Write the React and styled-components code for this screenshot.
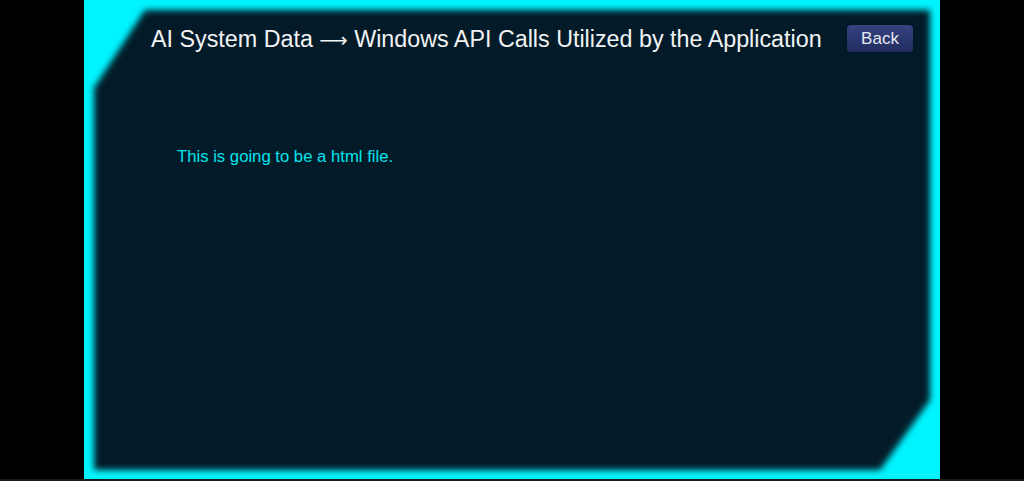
import React from 'react'
import styled, { createGlobalStyle } from 'styled-components'

const GlobalStyle = createGlobalStyle`
  html, body {
    margin: 0;
    padding: 0;
    background: #000;
    font-family: "Liberation Sans", Arial, sans-serif;
  }
`

const Screen = styled.div`
  width: 1024px;
  height: 481px;
  background: #000;
  display: flex;
  justify-content: center;
  box-sizing: border-box;
  border-bottom: 2px solid #1a1a1a;
`

const Frame = styled.div`
  width: 856px;
  height: 479px;
  background: #00f4ff;
  padding: 6px 6px 5px 6px;
  box-sizing: border-box;
  overflow: hidden;
`

const Panel = styled.section`
  position: relative;
  height: 100%;
  display: flex;
  flex-direction: column;
`

// the dark plate behind the content; blurred so its edges glow into the cyan frame
const Backdrop = styled.div`
  position: absolute;
  inset: 4px;
  filter: blur(3px);

  &::before {
    content: '';
    position: absolute;
    inset: 0;
    background: #031b29;
    clip-path: polygon(
      51px 0,
      100% 0,
      100% calc(100% - 70px),
      calc(100% - 50px) 100%,
      0 100%,
      0 78px
    );
  }
`

const Header = styled.header`
  position: relative;
  display: flex;
  align-items: flex-start;
  justify-content: space-between;
  padding: 18px 21px 0 61px;
`

const Title = styled.h1`
  margin: 0;
  font-size: 23.3px;
  line-height: 30px;
  font-weight: normal;
  color: #f1f3f4;
  white-space: nowrap;
`

const Arrow = styled.span`
  font-family: "DejaVu Sans", sans-serif;
  font-size: 0.85em;
`

const BackButton = styled.button`
  width: 66px;
  height: 27px;
  margin-top: 1px;
  border: none;
  border-radius: 4px;
  background: linear-gradient(#34427f, #222c60);
  color: #e6e8f2;
  font-family: "Liberation Sans", Arial, sans-serif;
  font-size: 17px;
  cursor: pointer;
  box-shadow: 0 0 2px rgba(0, 0, 0, 0.5);
`

const Body = styled.div`
  position: relative;
  padding: 91px 0 0 87px;
`

const Note = styled.p`
  margin: 0;
  font-size: 16.7px;
  color: #00e4ee;
`

const App = () => {
  return (
    <>
      <GlobalStyle />
      <Screen>
        <Frame>
          <Panel>
            <Backdrop />
            <Header>
              <Title>
                AI System Data <Arrow>⟶</Arrow> Windows API Calls Utilized by the Application
              </Title>
              <BackButton>Back</BackButton>
            </Header>
            <Body>
              <Note>This is going to be a html file.</Note>
            </Body>
          </Panel>
        </Frame>
      </Screen>
    </>
  )
}

export default App
